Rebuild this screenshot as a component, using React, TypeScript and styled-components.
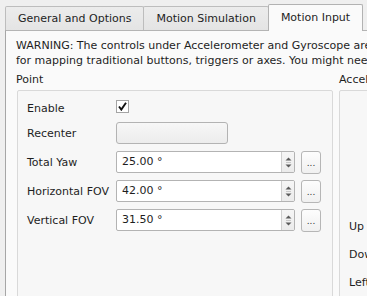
import React from 'react';
import styled, { createGlobalStyle } from 'styled-components';

const Global = createGlobalStyle`
  html, body { margin: 0; padding: 0; background: #efefef; }
  body { font-family: "DejaVu Sans", "Noto Sans", sans-serif; font-size: 11px; color: #1e1e1e; }
  #root { width: 367px; height: 296px; overflow: hidden; }
`;

const Window = styled.div`
  width: 367px;
  height: 296px;
  overflow: hidden;
  background: #efefef;
  padding: 4px 0 0 5px;
  box-sizing: border-box;
  display: flex;
  flex-direction: column;
`;

const TabBar = styled.div`
  display: flex;
  align-items: flex-end;
  height: 27px;
  position: relative;
  z-index: 1;
`;

const Tab = styled.div<{ $active?: boolean }>`
  box-sizing: border-box;
  display: flex;
  align-items: center;
  justify-content: center;
  white-space: nowrap;
  padding: ${(p) => (p.$active ? '0 12px 1px' : '0 12px')};
  height: ${(p) => (p.$active ? '27px' : '24px')};
  margin-bottom: ${(p) => (p.$active ? '0' : '1px')};
  margin-left: -1px;
  border: 1px solid ${(p) => (p.$active ? '#b2b2b2' : '#bdbdbd')};
  border-bottom: none;
  border-radius: 2px 2px 0 0;
  background: ${(p) => (p.$active ? '#fafafa' : 'linear-gradient(#ececec, #e4e4e4)')};
  &:first-child { margin-left: 0; }
`;

const Pane = styled.div`
  margin-top: -1px;
  flex: 1;
  border-top: 1px solid #b4b4b4;
  border-left: 1px solid #a6a6a6;
  background: #fafafa;
  padding: 7px 0 0 10px;
  min-width: 0;
`;

const Warning = styled.div`
  line-height: 15px;
  white-space: nowrap;
`;

const Columns = styled.div`
  display: grid;
  grid-template-columns: 317px 400px;
  column-gap: 6px;
  margin-top: 4px;
`;

const Column = styled.div`
  display: flex;
  flex-direction: column;
`;

const GroupTitle = styled.div`
  line-height: 15px;
  white-space: nowrap;
`;

const GroupBox = styled.div<{ $inset?: number }>`
  margin-top: 3px;
  margin-left: ${(p) => p.$inset ?? 0}px;
  height: 220px;
  border: 1px solid #d9d9d9;
  border-radius: 2px;
  background: #f7f7f7;
  padding: 5px 0 0 9px;
`;

const Form = styled.div<{ $top?: number; $firstRow?: number }>`
  display: grid;
  grid-template-columns: 89px auto;
  grid-template-rows: ${(p) => (p.$firstRow ? `${p.$firstRow}px` : 'none')};
  grid-auto-rows: 22px;
  row-gap: ${(p) => (p.$firstRow ? 7 : 6)}px;
  align-items: center;
  padding-top: ${(p) => p.$top ?? 0}px;
`;

const Label = styled.div`
  line-height: 13px;
  white-space: nowrap;
`;

const EnableLabel = styled(Label)`
  align-self: end;
`;

const CheckBox = styled.div`
  width: 13px;
  height: 13px;
  box-sizing: border-box;
  border: 1px solid #a4a4a4;
  background: #ffffff;
  align-self: start;
  margin-top: 4px;
  display: flex;
  align-items: center;
  justify-content: center;
`;

const Field = styled.div`
  display: flex;
  align-items: center;
  gap: 6px;
`;

const PushButton = styled.div`
  box-sizing: border-box;
  width: 112px;
  height: 22px;
  border: 1px solid #b3b3b3;
  border-radius: 3px;
  background: linear-gradient(#f7f7f7, #ececec);
`;

const SpinBox = styled.div`
  box-sizing: border-box;
  width: 179px;
  height: 22px;
  border: 1px solid #b3b3b3;
  border-radius: 2px;
  background: #ffffff;
  display: flex;
  overflow: hidden;
`;

const SpinText = styled.div`
  flex: 1;
  padding-left: 5px;
  line-height: 20px;
  white-space: nowrap;
`;

const SpinArrows = styled.div`
  width: 12px;
  border-left: 1px solid #cfcfcf;
  background: linear-gradient(#f6f6f6, #ebebeb);
  display: flex;
  align-items: center;
  justify-content: center;
`;

const MoreButton = styled.div`
  box-sizing: border-box;
  width: 20px;
  height: 23px;
  border: 1px solid #b6b6b6;
  border-radius: 3px;
  background: linear-gradient(#fdfdfd, #f0f0f0);
  display: flex;
  align-items: center;
  justify-content: center;
  font-size: 9px;
  color: #333;
  padding-top: 2px;
`;

const Spin: React.FC<{ value: string }> = ({ value }) => (
  <Field>
    <SpinBox>
      <SpinText>{value}</SpinText>
      <SpinArrows>
        <svg width="7" height="11" viewBox="0 0 7 11">
          <path d="M0.5 3.5 L3.5 0.5 L6.5 3.5 Z" fill="#5a5a5a" />
          <path d="M1 5.5 H6" stroke="#c8c8c8" strokeWidth="1" />
          <path d="M0.5 7.5 L3.5 10.5 L6.5 7.5 Z" fill="#5a5a5a" />
        </svg>
      </SpinArrows>
    </SpinBox>
    <MoreButton>...</MoreButton>
  </Field>
);

export default function App() {
  return (
    <>
      <Global />
      <Window>
        <TabBar>
          <Tab>General and Options</Tab>
          <Tab>Motion Simulation</Tab>
          <Tab $active>Motion Input</Tab>
        </TabBar>
        <Pane>
          <Warning>
            WARNING: The controls under Accelerometer and Gyroscope are designed to interface directly with motion sensor hardware. They are not intended
            <br />
            for mapping traditional buttons, triggers or axes. You might need to configure alternate input sources before using these controls.
          </Warning>
          <Columns>
            <Column>
              <GroupTitle>Point</GroupTitle>
              <GroupBox $inset={1}>
                <Form $firstRow={19}>
                  <EnableLabel>Enable</EnableLabel>
                  <CheckBox>
                    <svg width="9" height="9" viewBox="0 0 9 9">
                      <path d="M1 4.5 L3.3 7.6 L8 0.8" fill="none" stroke="#111" strokeWidth="1.9" />
                    </svg>
                  </CheckBox>
                  <Label>Recenter</Label>
                  <Field>
                    <PushButton />
                  </Field>
                  <Label>Total Yaw</Label>
                  <Spin value="25.00 °" />
                  <Label>Horizontal FOV</Label>
                  <Spin value="42.00 °" />
                  <Label>Vertical FOV</Label>
                  <Spin value="31.50 °" />
                </Form>
              </GroupBox>
            </Column>
            <Column>
              <GroupTitle>Accelerometer</GroupTitle>
              <GroupBox>
                <Form $top={119}>
                  <Label>Up</Label>
                  <div />
                  <Label>Down</Label>
                  <div />
                  <Label>Left</Label>
                  <div />
                </Form>
              </GroupBox>
            </Column>
          </Columns>
        </Pane>
      </Window>
    </>
  );
}
